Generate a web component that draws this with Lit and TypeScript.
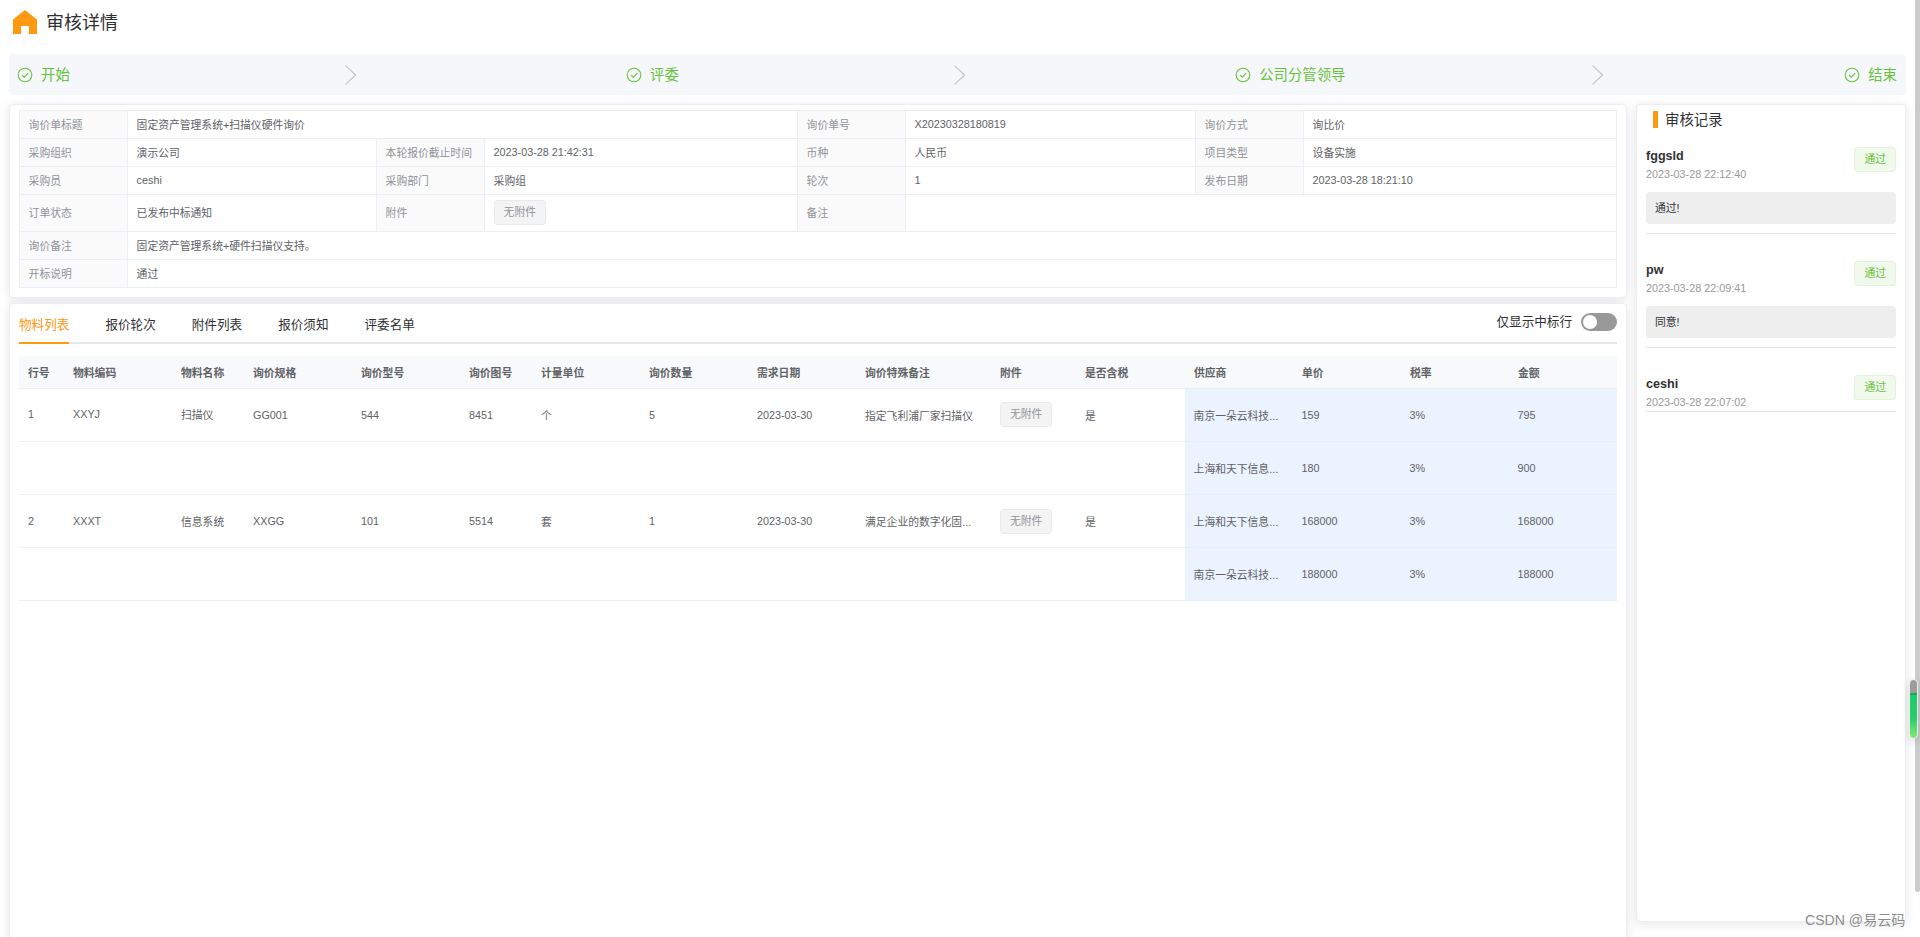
import { LitElement, html, svg, css, nothing } from "lit";
import { customElement, property } from "lit/decorators.js";

interface InfoCell { label: string; value?: string; tag?: string; span: number }
interface Item { code: string; name: string; rest: string[]; note: string; suppliers: string[][] }
interface Review { user: string; time: string; comment?: string }

const INFO: InfoCell[] = [
  { label: "询价单标题", value: "固定资产管理系统+扫描仪硬件询价", span: 3 },
  { label: "询价单号", value: "X20230328180819", span: 1 },
  { label: "询价方式", value: "询比价", span: 1 },
  { label: "采购组织", value: "演示公司", span: 1 },
  { label: "本轮报价截止时间", value: "2023-03-28 21:42:31", span: 1 },
  { label: "币种", value: "人民币", span: 1 },
  { label: "项目类型", value: "设备实施", span: 1 },
  { label: "采购员", value: "ceshi", span: 1 },
  { label: "采购部门", value: "采购组", span: 1 },
  { label: "轮次", value: "1", span: 1 },
  { label: "发布日期", value: "2023-03-28 18:21:10", span: 1 },
  { label: "订单状态", value: "已发布中标通知", span: 1 },
  { label: "附件", tag: "无附件", span: 1 },
  { label: "备注", value: "", span: 3 },
  { label: "询价备注", value: "固定资产管理系统+硬件扫描仪支持。", span: 7 },
  { label: "开标说明", value: "通过", span: 7 },
];

const STEPS = ["开始", "评委", "公司分管领导", "结束"];
const TABS = ["物料列表", "报价轮次", "附件列表", "报价须知", "评委名单"];
const HEAD = ["行号", "物料编码", "物料名称", "询价规格", "询价型号", "询价图号", "计量单位", "询价数量",
  "需求日期", "询价特殊备注", "附件", "是否含税", "供应商", "单价", "税率", "金额"];

const ITEMS: Item[] = [
  { code: "XXYJ", name: "扫描仪", rest: ["GG001", "544", "8451", "个", "5", "2023-03-30"], note: "指定飞利浦厂家扫描仪",
    suppliers: [["南京一朵云科技...", "159", "3%", "795"], ["上海和天下信息...", "180", "3%", "900"]] },
  { code: "XXXT", name: "信息系统", rest: ["XXGG", "101", "5514", "套", "1", "2023-03-30"], note: "满足企业的数字化固...",
    suppliers: [["上海和天下信息...", "168000", "3%", "168000"], ["南京一朵云科技...", "188000", "3%", "188000"]] },
];

const REVIEWS: Review[] = [
  { user: "fggsld", time: "2023-03-28 22:12:40", comment: "通过!" },
  { user: "pw", time: "2023-03-28 22:09:41", comment: "同意!" },
  { user: "ceshi", time: "2023-03-28 22:07:02" },
];

const checkIcon = svg`<svg class="check" width="16" height="16" viewBox="0 0 16 16" fill="none" stroke="currentColor">
  <circle cx="8" cy="8" r="6.8" stroke-width="1.1"/><path d="M5 8.2 7.3 10.2 11.2 6.2" stroke-width="1.1"/></svg>`;
const chevron = svg`<svg width="12" height="20" viewBox="0 0 12 20" fill="none" stroke="#c0c4cc" stroke-width="1.2"><path d="M0.6 0.6 10.6 10 0.6 19.4"/></svg>`;

@customElement("status-tag")
export class StatusTag extends LitElement {
  @property({ reflect: true }) kind = "info";
  static styles = css`
    :host { display: inline-block; box-sizing: border-box; height: 25px; line-height: 22px; padding: 0 9px;
      border: 1px solid #e9e9eb; border-radius: 3.6px; background: #f4f4f5; color: #909399;
      font-size: 10.8px; white-space: nowrap; }
    :host([kind="success"]) { background: #f0f9eb; border-color: #e1f3d8; color: #67c23a; }
  `;
  render() { return html`<slot></slot>`; }
}

@customElement("app-root")
export class AppRoot extends LitElement {
  static styles = css`
    :host { display: block; position: relative; height: 937px; overflow: hidden; background: #fff; color: #303133;
      font-family: "Liberation Sans", "Noto Sans CJK SC", sans-serif; font-size: 10.8px; }
    * { box-sizing: border-box; }
    header { display: flex; align-items: flex-start; height: 54px; padding: 10px 0 0 13px; gap: 9px; font-size: 18px; }
    header svg { display: block; }
    header span { line-height: 26px; }
    .steps { display: flex; align-items: center; margin: 0 14px 0 9px; height: 41px; padding: 0 9px 0 8px;
      border-radius: 4px; background: #f5f7fa; color: #67c23a; font-size: 14.4px; }
    .step { display: flex; align-items: center; flex: 1; }
    .step.last { flex: none; }
    .check { flex: none; margin-right: 8px; }
    .step-title { line-height: 20px; }
    .arrow { flex: 1; display: flex; justify-content: center; padding-left: 6px; }
    main { display: flex; align-items: flex-start; gap: 9px; padding: 9px 14px 0 9px; }
    .left { width: 1618px; display: flex; flex-direction: column; gap: 5px; }
    .card { background: #fff; border: 1px solid #ebeef5; border-radius: 4px; box-shadow: 0 2px 11px rgba(0,0,0,.1); }
    .info-card { height: 194px; padding: 5px 9px; }
    .info { display: grid; grid-template-columns: 108px 249px 108px 313px 108px 290px 108px 313px;
      grid-template-rows: 28px 28px 28px 37px 28px 28px; border: solid #ebeef5; border-width: 1px 0 0 1px; width: 1598px; }
    .label, .value { display: flex; align-items: center; padding: 0 8.6px 2px; border: solid #ebeef5; border-width: 0 1px 1px 0;
      white-space: nowrap; color: #606266; }
    .label { background: #fafafa; color: #909399; }
    .s3 { grid-column: span 3; }
    .s7 { grid-column: span 7; }
    .list-card { height: 700px; padding: 0 9px; }
    .tabs { display: flex; height: 40px; gap: 36px; font-size: 12.6px; border-bottom: 2px solid #e4e7ed; }
    .tab { height: 40px; line-height: 43px; border-bottom: 2px solid transparent; }
    .tab.active { color: #ff9912; border-color: #ff9912; }
    .filter { margin-left: auto; display: flex; align-items: center; gap: 9px; height: 36px; }
    .filter-text { padding-bottom: 4px; }
    .switch { width: 36px; height: 18px; border-radius: 9px; background: #999; padding: 2px; }
    .knob { width: 14px; height: 14px; border-radius: 50%; background: #fff; }
    .row { display: grid; height: 53px; align-items: stretch; color: #606266; border-bottom: 1px solid #ebeef5;
      grid-template-columns: 45px 108px 72px 108px 108px 72px 108px 108px 108px 135px 85px 109px 108px 108px 108px 108px; }
    .row.head { height: 33px; margin-top: 12px; background: #f8f9fb; font-weight: bold; padding-bottom: 1px; }
    .cell { display: flex; align-items: center; padding: 0 0 0 9px; min-width: 0; white-space: nowrap; }
    .up { padding-bottom: 2px; }
    .row.second .up { padding-bottom: 0; }
    .tag-cell { padding-bottom: 1px; }
    .row.second .tag-cell { padding: 1px 0 0 9px; }
    .quote { background: #ebf3ff; padding-left: 8.6px; }
    .quote-start { grid-column: 13; }
    aside { width: 270px; height: 818px; padding: 6px 9px; }
    .aside-title { display: flex; align-items: flex-start; gap: 7px; height: 18px; padding-left: 7px; font-size: 14.4px; line-height: 19px; }
    .bar { width: 5px; height: 17px; background: #ff9912; }
    .review { padding-top: 18px; margin-bottom: 9px; border-bottom: 1px solid #e4e4e4; }
    .review:not(.bare) { height: 105px; }
    .review.bare { height: 55px; }
    .review-head { display: flex; justify-content: space-between; align-items: flex-start; }
    .user { font-size: 12.6px; font-weight: bold; line-height: 18px; }
    .time { color: #999; line-height: 18px; }
    .comment { margin-top: 9px; height: 32px; border-radius: 4px; background: #eee; padding: 0 9px; line-height: 32px; }
    .scroll { position: absolute; right: 0; top: 0; width: 5px; height: 892px; background: #cacdcb; border-radius: 0 0 3px 3px; }
    .gauge { position: absolute; left: 1909px; top: 679px; width: 9px; height: 60px; border-radius: 5px; overflow: hidden;
      border: 1px solid #ececec; box-shadow: 0 3px 8px rgba(0,0,0,.15);
      background: linear-gradient(#9c9c9c 0 13px, #14a85a 13px 15px, #1fcb70 15px, #29cc6a 38px, #7fe878 57px); }
    .mark { position: absolute; left: 1805px; top: 909px; font-size: 14.1px; line-height: 22px; color: #8c8c8c;
      text-shadow: 0 0 1px #fff; white-space: nowrap; }
  `;

  private row(item: Item, index: number) {
    return item.suppliers.map((s, i) => html`
      <div class="row ${index > 0 ? "second" : ""}">
        ${i === 0 ? html`
          <div class="cell up">${index + 1}</div>
          <div class="cell up">${item.code}</div>
          <div class="cell up">${item.name}</div>
          ${item.rest.map((v) => html`<div class="cell">${v}</div>`)}
          <div class="cell">${item.note}</div>
          <div class="cell tag-cell"><status-tag>无附件</status-tag></div>
          <div class="cell">是</div>` : nothing}
        ${s.map((v, k) => html`<div class="cell quote ${k === 0 ? "quote-start" : ""}">${v}</div>`)}
      </div>`);
  }

  render() {
    return html`
      <header>
        <svg width="24" height="24" viewBox="0 0 24 24"><path d="M12 0 24 9.5V24H16V16H8V24H0V9.5Z" fill="#ff9912"/></svg>
        <span>审核详情</span>
      </header>
      <nav class="steps">
        ${STEPS.map((s, i) => html`<div class="step ${i === 3 ? "last" : ""}">${checkIcon}<span class="step-title">${s}</span>
          ${i < 3 ? html`<span class="arrow">${chevron}</span>` : nothing}</div>`)}
      </nav>
      <main>
        <div class="left">
          <section class="card info-card">
            <div class="info">
              ${INFO.map((c) => html`<div class="label">${c.label}</div>
                <div class="value s${c.span}">${c.tag ? html`<status-tag>${c.tag}</status-tag>` : c.value}</div>`)}
            </div>
          </section>
          <section class="card list-card">
            <div class="tabs">
              ${TABS.map((t, i) => html`<div class="tab ${i === 0 ? "active" : ""}">${t}</div>`)}
              <div class="filter"><span class="filter-text">仅显示中标行</span><div class="switch"><div class="knob"></div></div></div>
            </div>
            <div class="row head">${HEAD.map((h) => html`<div class="cell">${h}</div>`)}</div>
            ${ITEMS.map((it, i) => this.row(it, i))}
          </section>
        </div>
        <aside class="card">
          <div class="aside-title"><span class="bar"></span><span>审核记录</span></div>
          ${REVIEWS.map((r) => html`
            <div class="review ${r.comment ? "" : "bare"}">
              <div class="review-head">
                <div><div class="user">${r.user}</div><div class="time">${r.time}</div></div>
                <status-tag kind="success">通过</status-tag>
              </div>
              ${r.comment ? html`<div class="comment">${r.comment}</div>` : nothing}
            </div>`)}
        </aside>
      </main>
      <div class="scroll"></div>
      <div class="gauge"></div>
      <div class="mark">CSDN @易云码</div>
    `;
  }
}
